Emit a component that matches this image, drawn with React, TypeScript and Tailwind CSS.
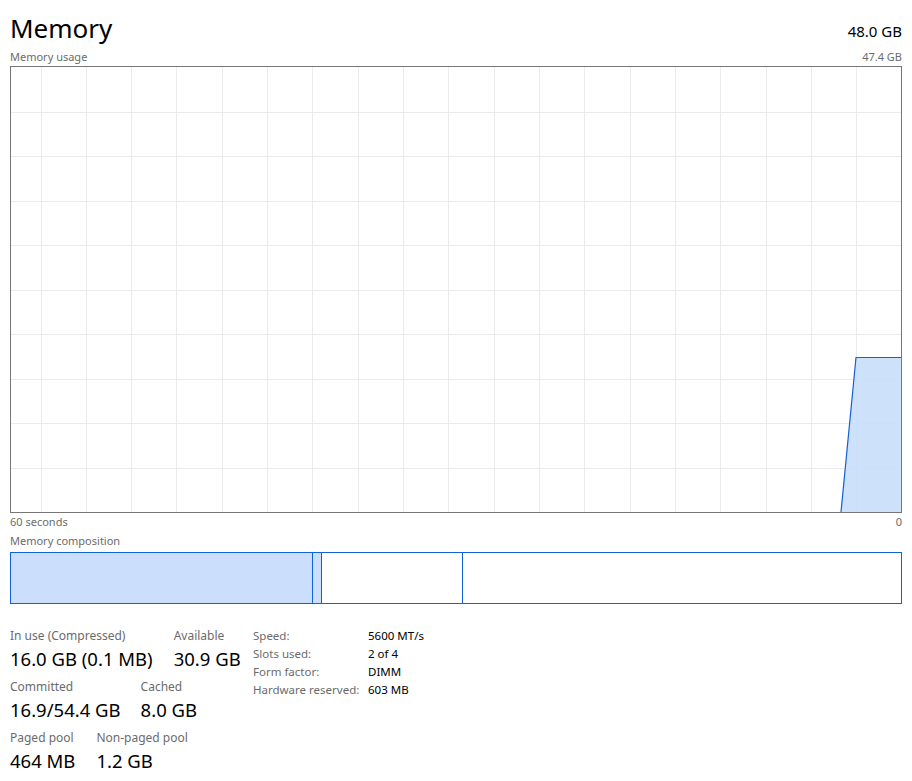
import React from 'react';

const FONT = "font-['Noto_Sans','Open_Sans',sans-serif]";

// chart geometry (inner box of the usage graph)
const W = 890;
const H = 445;
const COL = 45.33;
const ROW = 44.5;
const OFFSET = 29.5;

const UsageChart: React.FC = () => {
  const cols: number[] = [];
  for (let x = OFFSET; x < W; x += COL) cols.push(Math.round(x) + 0.5);
  const rows: number[] = [];
  for (let i = 1; i < 10; i++) rows.push(Math.round(i * ROW) + 0.5);

  return (
    <div className="border border-[#767676] h-[447px]">
      <svg width={W} height={H} viewBox={`0 0 ${W} ${H}`} className="block">
        {cols.map(x => (
          <line key={'c' + x} x1={x} y1={0} x2={x} y2={H} stroke="#ebebeb" strokeWidth={1} />
        ))}
        {rows.map(y => (
          <line key={'r' + y} x1={0} y1={y} x2={W} y2={y} stroke="#ebebeb" strokeWidth={1} />
        ))}
        <polygon points={`830,${H} 845,290.5 ${W},290.5 ${W},${H}`} fill="#c9defb" fillOpacity={0.9} />
        <polyline points={`830,${H} 845,290.5 ${W},290.5`} fill="none" stroke="#1161d8" strokeWidth={1.2} />
      </svg>
    </div>
  );
};

const Stat: React.FC<{ label: string; value: string }> = ({ label, value }) => (
  <div className="flex flex-col">
    <span className="text-[12px] leading-[16px] text-[#6b6b6b]">{label}</span>
    <span className="text-[18.5px] leading-[26px] text-black mt-[2px]">{value}</span>
  </div>
);

const Info: React.FC<{ label: string; value: string }> = ({ label, value }) => (
  <div className="flex text-[11.5px] leading-[18px]">
    <span className="w-[115px] text-[#6b6b6b]">{label}</span>
    <span className="text-black">{value}</span>
  </div>
);

const App: React.FC = () => {
  return (
    <div className={`w-[912px] h-[781px] bg-white px-[10px] ${FONT} overflow-hidden`}>
      <div className="flex justify-between items-end pt-[9px]">
        <h1 className="text-[26px] leading-[38px] text-black font-normal">Memory</h1>
        <span className="text-[15px] leading-[22px] text-black mb-[5px]">48.0 GB</span>
      </div>
      <div className="flex justify-between text-[11px] leading-[18px] text-[#6b6b6b] mt-[1px]">
        <span>Memory usage</span>
        <span>47.4 GB</span>
      </div>
      <UsageChart />
      <div className="flex justify-between text-[11px] leading-[18px] text-[#6b6b6b]">
        <span>60 seconds</span>
        <span>0</span>
      </div>
      <div className="text-[11px] leading-[18px] text-[#6b6b6b] mt-[1px]">Memory composition</div>

      {/* composition bar: in use | modified | standby | free */}
      <div className="flex border border-[#1161d8] h-[52px] mt-[2px]">
        <div className="w-[302px] bg-[#cbdffc] border-r border-[#1161d8]" />
        <div className="w-[9px] bg-[#cbdffc] border-r border-[#1161d8]" />
        <div className="w-[141px] border-r border-[#1161d8]" />
        <div className="flex-1" />
      </div>

      <div className="flex mt-[24px]">
        <div className="flex flex-col gap-[7px] w-[243px]">
          <div className="flex gap-[21px]">
            <Stat label="In use (Compressed)" value="16.0 GB (0.1 MB)" />
            <Stat label="Available" value="30.9 GB" />
          </div>
          <div className="flex gap-[20px]">
            <Stat label="Committed" value="16.9/54.4 GB" />
            <Stat label="Cached" value="8.0 GB" />
          </div>
          <div className="flex gap-[21px]">
            <Stat label="Paged pool" value="464 MB" />
            <Stat label="Non-paged pool" value="1.2 GB" />
          </div>
        </div>
        <div className="flex flex-col -mt-[1px]">
          <Info label="Speed:" value="5600 MT/s" />
          <Info label="Slots used:" value="2 of 4" />
          <Info label="Form factor:" value="DIMM" />
          <Info label="Hardware reserved:" value="603 MB" />
        </div>
      </div>
    </div>
  );
};

export default App;
